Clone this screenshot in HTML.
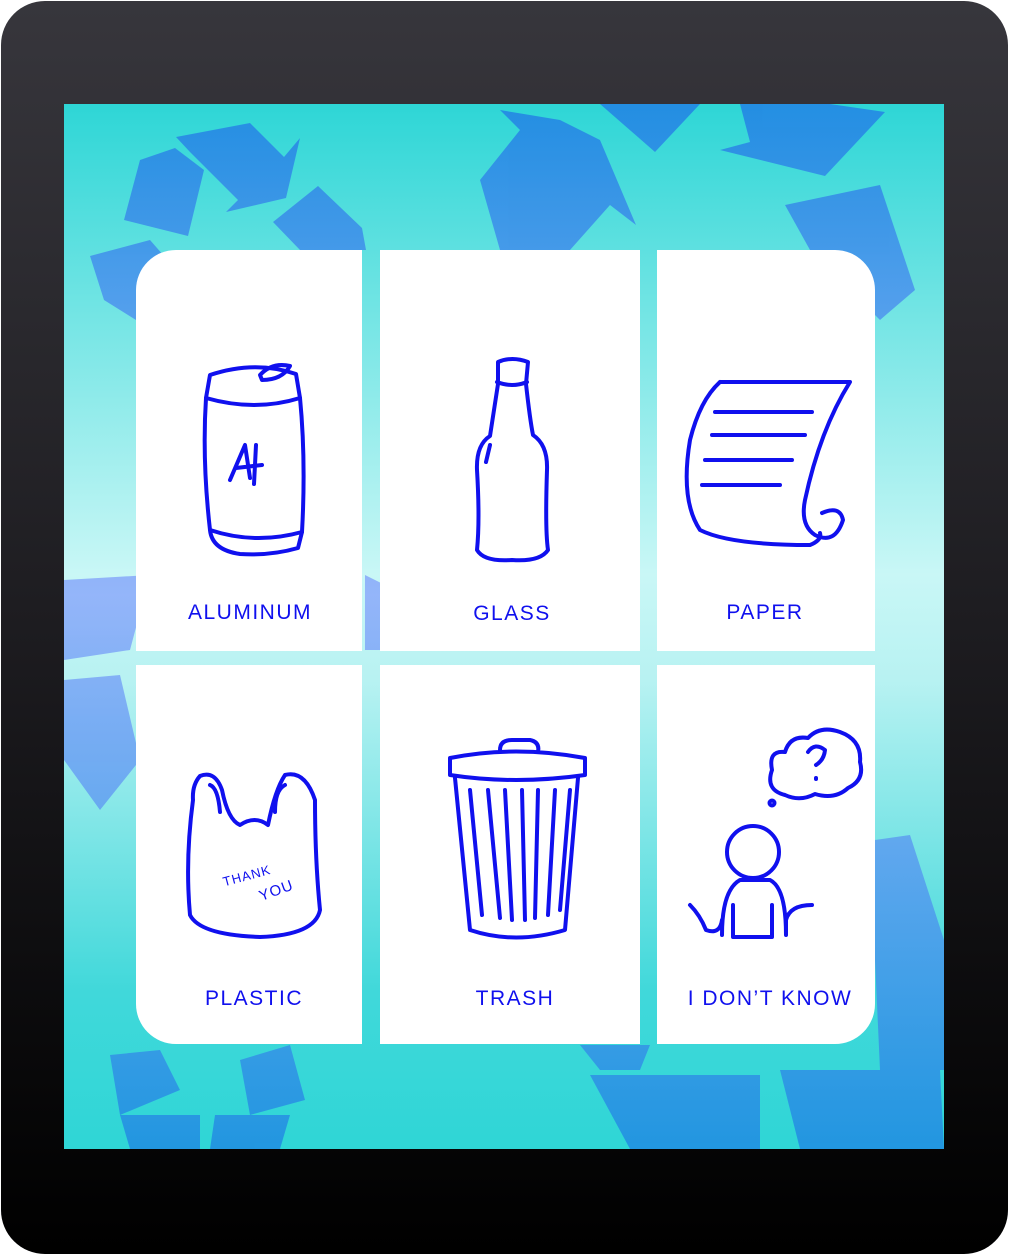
<!DOCTYPE html>
<html><head><meta charset="utf-8"><style>
html,body{margin:0;padding:0;width:1009px;height:1255px;background:#fff;overflow:hidden}
svg{display:block}
text{font-family:"Liberation Sans",sans-serif;font-size:21px;fill:#1010ee;letter-spacing:1.5px;text-anchor:middle}
</style></head><body>
<svg width="1009" height="1255" viewBox="0 0 1009 1255">
<defs>
<linearGradient id="fr" x1="0" y1="0" x2="0" y2="1"><stop offset="0" stop-color="#37363c"/><stop offset="0.5" stop-color="#1d1c20"/><stop offset="1" stop-color="#000"/></linearGradient>
<linearGradient id="bg" x1="0" y1="0" x2="0" y2="1"><stop offset="0" stop-color="#2ed6d6"/><stop offset="0.45" stop-color="#c9f7f6"/><stop offset="0.55" stop-color="#b8f2f2"/><stop offset="0.85" stop-color="#40d8da"/><stop offset="1" stop-color="#2fd6d6"/></linearGradient>
<linearGradient id="sh" gradientUnits="userSpaceOnUse" x1="0" y1="104" x2="0" y2="1149"><stop offset="0" stop-color="#2287e4"/><stop offset="0.47" stop-color="#8eaefa"/><stop offset="1" stop-color="#2190e2"/></linearGradient>
<clipPath id="sc"><rect x="64" y="104" width="880" height="1045"/></clipPath>
</defs>
<rect x="1" y="1" width="1007" height="1253" rx="44" fill="url(#fr)"/>
<rect x="64" y="104" width="880" height="1045" fill="url(#bg)"/>
<g clip-path="url(#sc)" fill="url(#sh)" opacity="0.9">
<polygon points="176,137 250,123 284,157 300,138 286,198 226,212 238,200 190,152"/>
<polygon points="140,160 175,148 204,170 188,236 124,220"/>
<polygon points="273,222 318,186 362,228 366,250 300,250"/>
<polygon points="90,256 150,240 164,256 136,320 104,300"/>
<polygon points="480,180 520,130 500,110 560,120 600,140 636,225 610,205 570,250 500,250"/>
<polygon points="600,104 700,104 655,152"/>
<polygon points="740,104 830,104 885,112 825,176 720,150 750,142"/>
<polygon points="785,205 880,185 915,290 880,320 810,250"/>
<polygon points="64,580 150,575 130,650 64,660"/>
<polygon points="64,680 120,675 140,760 100,810 64,760"/>
<polygon points="365,575 395,590 380,650 365,650"/>
<polygon points="875,840 910,835 944,940 944,1070 880,1070 875,960"/>
<polygon points="590,1075 760,1075 760,1149 630,1149"/>
<polygon points="780,1070 940,1070 944,1149 800,1149"/>
<polygon points="110,1055 160,1050 180,1090 120,1115"/>
<polygon points="240,1060 290,1045 305,1100 250,1115"/>
<polygon points="120,1115 200,1115 200,1149 130,1149"/>
<polygon points="215,1115 290,1115 280,1149 210,1149"/>
<polygon points="580,1045 650,1045 640,1070 600,1070"/>
</g>
<g fill="#fff">
<path d="M176,250 H362 V651 H136 V290 A40,40 0 0 1 176,250Z"/>
<rect x="380" y="250" width="260" height="401"/>
<path d="M657,250 H835 A40,40 0 0 1 875,290 V651 H657Z"/>
<path d="M136,665 H362 V1044 H176 A40,40 0 0 1 136,1004Z"/>
<rect x="380" y="665" width="260" height="379"/>
<path d="M657,665 H875 V1004 A40,40 0 0 1 835,1044 H657Z"/>
</g>
<text x="250" y="619">ALUMINUM</text>
<text x="512" y="620">GLASS</text>
<text x="765" y="619">PAPER</text>
<text x="254" y="1005">PLASTIC</text>
<text x="515" y="1005">TRASH</text>
<text x="770" y="1005">I DON’T KNOW</text>
<g fill="none" stroke="#1010ee" stroke-width="4" stroke-linecap="round" stroke-linejoin="round">
<path d="M210,375 Q255,360 296,374 L300,398 Q255,412 206,398Z"/>
<path d="M206,398 Q202,460 210,530 Q255,545 302,532 Q306,460 300,398"/>
<path d="M210,530 Q212,550 240,554 Q270,556 298,548 L302,532"/>
<path d="M260,375 Q272,362 290,366 Q282,380 262,380Z"/>
<path d="M230,480 L245,445 L250,478 M236,468 L262,465 M256,445 L254,484"/>
<path d="M498,362 Q512,356 528,362 L526,384 Q530,420 533,435 Q548,445 547,470 Q545,530 548,550 Q540,562 512,560 Q484,562 477,550 Q480,520 477,470 Q476,445 490,436 Q494,410 498,384Z"/>
<path d="M497,382 Q512,388 527,382 M490,445 L486,462"/>
<path d="M720,382 L850,382 Q820,430 805,500 Q800,525 815,535 Q835,545 843,520 Q840,505 822,513 M720,382 Q700,400 690,440 Q680,500 700,530 Q730,545 810,545 Q822,540 820,533"/>
<path d="M715,412 L812,412 M712,435 L805,435 M705,460 L792,460 M702,485 L780,485"/>
<path d="M200,776 Q215,770 222,790 Q228,820 240,825 Q255,815 268,825 Q275,790 285,775 Q305,770 315,800 Q315,860 320,910 Q315,935 260,937 Q200,935 190,915 Q185,860 193,800 Q192,785 200,776Z"/>
<path d="M210,785 Q218,788 220,812 M285,785 Q275,790 275,812"/>
<path d="M450,758 Q515,745 585,758 L585,775 Q515,785 450,775Z M500,750 Q500,740 512,740 L530,740 Q540,742 538,752"/>
<path d="M455,778 L470,930 Q515,945 565,930 L578,778"/>
<path d="M470,790 L482,915 M488,790 L500,918 M505,790 L512,920 M522,790 L525,920 M538,790 L535,918 M555,790 L548,915 M570,790 L560,910"/>
<circle cx="753" cy="852" r="26"/>
<path d="M722,935 Q722,890 740,880 L770,880 Q786,888 786,935 L786,920 Q790,905 812,905 M722,920 Q720,935 706,930 Q700,915 690,905 M733,905 L733,937 L772,937 L772,905"/>
<path d="M772,770 Q768,750 785,752 Q790,735 808,738 Q820,725 840,732 Q862,740 860,762 Q865,780 848,788 Q835,800 815,794 Q800,802 785,795 Q765,790 772,770Z"/>
<path d="M808,752 Q815,742 825,750 Q824,760 816,765 M816,778 L816,779"/>
<circle cx="772" cy="803" r="2.5"/>
</g>
<text x="248" y="880" style="font-size:13px;letter-spacing:1px" transform="rotate(-15 248 880)">THANK</text>
<text x="278" y="895" style="font-size:15px;letter-spacing:1px" transform="rotate(-20 278 895)">YOU</text>
</svg>
</body></html>
